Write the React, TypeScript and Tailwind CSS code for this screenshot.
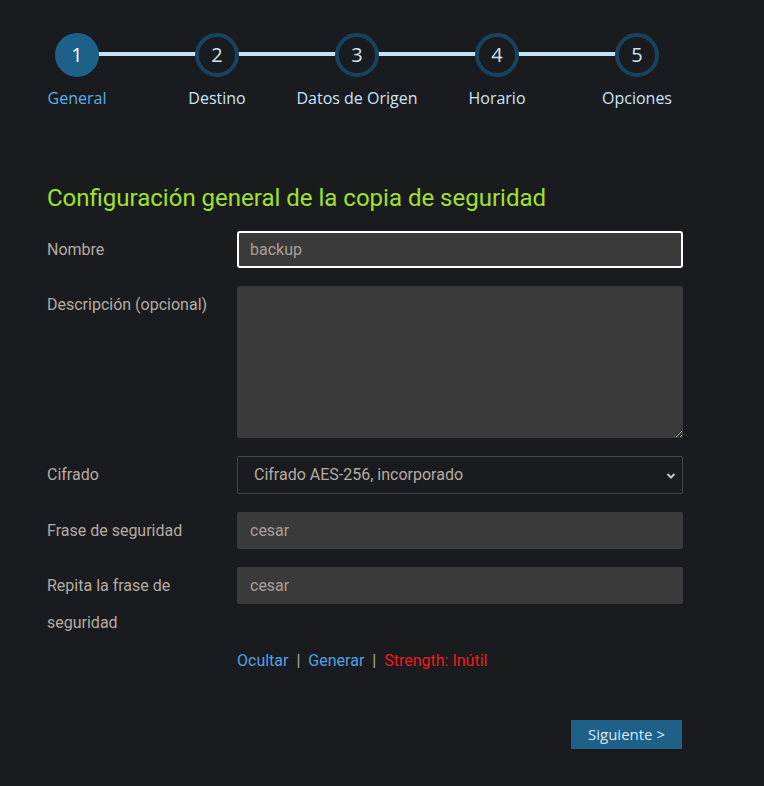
import React from 'react';

const steps = [
  { n: 1, label: 'General' },
  { n: 2, label: 'Destino' },
  { n: 3, label: 'Datos de Origen' },
  { n: 4, label: 'Horario' },
  { n: 5, label: 'Opciones' },
];

const Stepper = () => (
  <div className="relative flex w-[700px] pt-[33px]">
    <div className="absolute left-[77px] right-[63px] top-[52px] h-[4px] bg-[#c5e3f7]" />
    {steps.map((s) => (
      <div key={s.n} className="relative flex w-[140px] flex-col items-center">
        <div
          className={
            s.n === 1
              ? 'flex h-[44px] w-[44px] items-center justify-center rounded-full border-[4px] border-[#1e6088] bg-[#1e6088] text-[20px] text-white'
              : 'flex h-[44px] w-[44px] items-center justify-center rounded-full border-[4px] border-[#17435f] bg-[#1a1b1e] text-[20px] text-[#c8e6fa]'
          }
        >
          {s.n}
        </div>
        <div className={s.n === 1 ? 'mt-[9px] text-[16px] text-[#5ab0e8]' : 'mt-[9px] text-[16px] text-[#c8e6fa]'}>
          {s.label}
        </div>
      </div>
    ))}
  </div>
);

const Label = ({ children }: { children: React.ReactNode }) => (
  <div className="mr-[20px] w-[170px] shrink-0 text-[16px] leading-[37px] text-[#b4aca4]">{children}</div>
);

const App = () => {
  return (
    <div className="min-h-[786px] w-[764px] bg-[#1a1b1e] font-['Open_Sans',sans-serif]">
      <div className="pl-[7px]">
        <Stepper />
      </div>

      <div className="pl-[47px] pr-[81px] font-['Roboto',sans-serif]">
        <h2 className="mt-[70px] text-[24px] font-normal text-[#9fe22f]">
          Configuración general de la copia de seguridad
        </h2>

        <div className="mt-[15px] flex">
          <Label>Nombre</Label>
          <input
            readOnly
            value="backup"
            className="h-[37px] w-[446px] rounded-[3px] border-2 border-white bg-[#3a3a3a] px-[11px] text-[16px] text-[#a8a09a] outline-none"
          />
        </div>

        <div className="mt-[18px] flex">
          <Label>Descripción (opcional)</Label>
          <textarea readOnly className="h-[152px] w-[446px] resize-y rounded-[2px] bg-[#3a3a3a] outline-none" />
        </div>

        <div className="mt-[18px] flex">
          <Label>Cifrado</Label>
          <div className="relative h-[38px] w-[446px] rounded-[2px] border border-[#44464a] bg-[#1a1b1e]">
            <div className="px-[16px] text-[16px] leading-[36px] text-[#b4aca4]">Cifrado AES-256, incorporado</div>
            <svg className="absolute right-[6px] top-[15px]" width="10" height="8" viewBox="0 0 10 8">
              <path d="M1.5 2 L5 5.5 L8.5 2" stroke="#c8c8c8" strokeWidth="2" fill="none" />
            </svg>
          </div>
        </div>

        <div className="mt-[18px] flex">
          <Label>Frase de seguridad</Label>
          <div className="h-[37px] w-[446px] rounded-[2px] bg-[#3a3a3a] px-[13px] text-[16px] leading-[37px] text-[#a8a09a]">
            cesar
          </div>
        </div>

        <div className="mt-[18px] flex">
          <Label>Repita la frase de seguridad</Label>
          <div className="h-[37px] w-[446px] rounded-[2px] bg-[#3a3a3a] px-[13px] text-[16px] leading-[37px] text-[#a8a09a]">
            cesar
          </div>
        </div>

        <div className="mt-[8px] pl-[190px] text-[16px] leading-[24px]">
          <span className="text-[#4ea3e6]">Ocultar</span>
          <span className="mx-[8px] text-[#b4aca4]">|</span>
          <span className="text-[#4ea3e6]">Generar</span>
          <span className="mx-[8px] text-[#b4aca4]">|</span>
          <span className="text-[#ec1c1c]">Strength: Inútil</span>
        </div>

        <div className="mt-[47px] flex justify-end pr-[1px]">
          <button className="h-[29px] w-[111px] bg-[#1e6088] font-['Open_Sans',sans-serif] text-[15px] text-[#d6ecfa]">
            Siguiente &gt;
          </button>
        </div>
      </div>
    </div>
  );
};

export default App;
